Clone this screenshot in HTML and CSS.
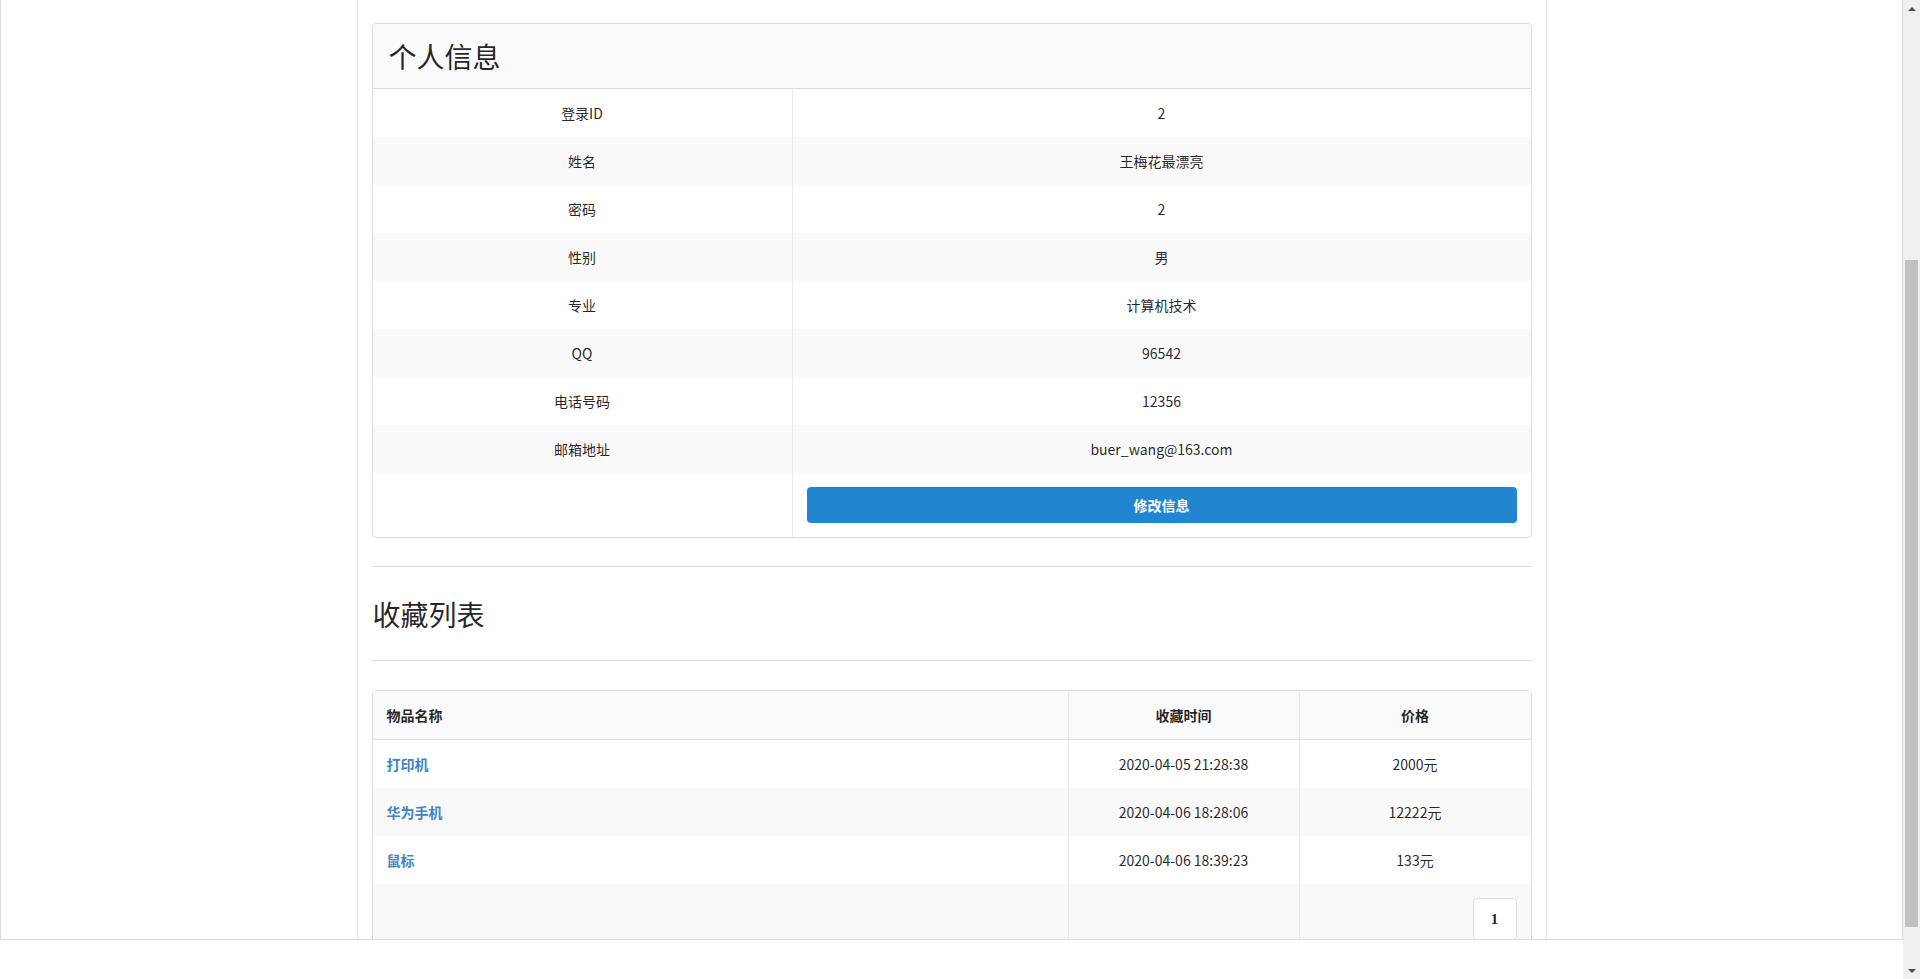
FILE: index.html
```html
<!DOCTYPE html>
<html lang="zh-CN">
<head>
<meta charset="utf-8">
<title>个人信息</title>
<link rel="stylesheet" href="styles.css">
</head>
<body>
<div class="screen">
  <div class="viewport">
    <div class="frame">
      <div class="container">
        <table class="card info">
          <colgroup><col class="info-label"><col class="info-value"></colgroup>
          <thead>
            <tr><th colspan="2" class="card-title">个人信息</th></tr>
          </thead>
          <tbody>
            <tr><td>登录ID</td><td>2</td></tr>
            <tr><td>姓名</td><td>王梅花最漂亮</td></tr>
            <tr><td>密码</td><td>2</td></tr>
            <tr><td>性别</td><td>男</td></tr>
            <tr><td>专业</td><td>计算机技术</td></tr>
            <tr><td>QQ</td><td>96542</td></tr>
            <tr><td>电话号码</td><td>12356</td></tr>
            <tr><td>邮箱地址</td><td>buer_wang@163.com</td></tr>
            <tr class="action-row"><td></td><td><button class="btn-primary" type="button">修改信息</button></td></tr>
          </tbody>
        </table>

        <div class="divider"></div>
        <h2 class="section-title">收藏列表</h2>
        <div class="divider"></div>

        <table class="card list">
          <colgroup><col class="list-name"><col class="list-time"><col class="list-price"></colgroup>
          <thead>
            <tr><th class="left">物品名称</th><th>收藏时间</th><th>价格</th></tr>
          </thead>
          <tbody>
            <tr><td class="left"><a class="item-link" href="#">打印机</a></td><td>2020-04-05 21:28:38</td><td>2000元</td></tr>
            <tr><td class="left"><a class="item-link" href="#">华为手机</a></td><td>2020-04-06 18:28:06</td><td>12222元</td></tr>
            <tr><td class="left"><a class="item-link" href="#">鼠标</a></td><td>2020-04-06 18:39:23</td><td>133元</td></tr>
          </tbody>
          <tfoot>
            <tr><td></td><td></td><td class="pager-cell"><a class="page-item" href="#">1</a></td></tr>
          </tfoot>
        </table>
      </div>
    </div>
  </div>
  <div class="scrollbar">
    <div class="sb-btn"><span class="arrow-up"></span></div>
    <div class="sb-track"><div class="sb-thumb"></div></div>
    <div class="sb-btn"><span class="arrow-down"></span></div>
  </div>
</div>
</body>
</html>
```

FILE: styles.css
```css
* { box-sizing: border-box; }

html, body {
  margin: 0;
  padding: 0;
  height: 979px;
  overflow: hidden;
  background: #ffffff;
}

body {
  font-family: "Noto Sans CJK SC", "Noto Sans", sans-serif;
  font-size: 14px;
  line-height: 20px;
  color: rgba(0, 0, 0, 0.87);
}

.screen {
  display: flex;
  height: 979px;
}

.viewport {
  flex: 1;
  min-width: 0;
  background: #ffffff;
}

.frame {
  height: 940px;
  border-left: 1px solid #dcdcdc;
  border-right: 1px solid #dcdcdc;
  border-bottom: 1px solid #dcdcdc;
  overflow: hidden;
  background: #ffffff;
}

.container {
  width: 1190px;
  margin: 0 auto;
  padding: 23px 14px 0;
  border-left: 1px solid #e6e6e6;
  border-right: 1px solid #e6e6e6;
  min-height: 940px;
}

/* tables */
.card {
  width: 1160px;
  table-layout: fixed;
  border-collapse: separate;
  border-spacing: 0;
  border: 1px solid #dedede;
  border-radius: 4px;
  background: #ffffff;
}

.card th,
.card td {
  padding: 14px;
  text-align: center;
  vertical-align: middle;
  font-weight: normal;
}

.card th + th,
.card td + td {
  border-left: 1px solid #e9e9e9;
}

.card thead th {
  background: #f9fafb;
  border-bottom: 1px solid #dedede;
}

.card thead tr:first-child th:first-child { border-top-left-radius: 3px; }
.card thead tr:first-child th:last-child { border-top-right-radius: 3px; }

.card tbody tr:nth-child(even) td {
  background: #f9f9fa;
}

.info-label { width: 419px; }
.info-value { width: 739px; }

.card-title {
  font-size: 28px;
  line-height: 36px;
  font-weight: normal;
}

.card th.card-title {
  text-align: left;
  padding-left: 16px;
}

.btn-primary {
  display: block;
  width: 100%;
  height: 36px;
  border: 0;
  border-radius: 4px;
  background: #2185d0;
  color: #ffffff;
  font-family: "Noto Sans CJK SC", "Noto Sans", sans-serif;
  font-size: 14px;
  font-weight: bold;
  line-height: 20px;
  cursor: pointer;
}

/* section */
.divider {
  margin-top: 28px;
  border-top: 1px solid #dedede;
  height: 0;
}

.section-title {
  margin: 29px 0 28px;
  padding-left: 1px;
  font-size: 28px;
  line-height: 36px;
  font-weight: normal;
  color: rgba(0, 0, 0, 0.87);
}

.section-title + .divider { margin-top: 0; }

.list { margin-top: 29px; }

.list-name { width: 695px; }
.list-time { width: 231px; }
.list-price { width: 232px; }

.list thead th {
  font-weight: bold;
}

.card th.left,
.card td.left {
  text-align: left;
}

.item-link {
  color: #4183c4;
  font-weight: bold;
  text-decoration: none;
}

.list tfoot td {
  background: #f9f9fa;
  height: 70px;
  vertical-align: top;
}

.card td.pager-cell { text-align: right; }

.page-item {
  display: inline-flex;
  align-items: center;
  justify-content: center;
  width: 44px;
  height: 42px;
  border: 1px solid #dedede;
  border-radius: 4px;
  background: #ffffff;
  color: rgba(0, 0, 0, 0.87);
  font-family: "Liberation Serif", serif;
  font-weight: bold;
  font-size: 15px;
  text-decoration: none;
}

/* fake scrollbar */
.scrollbar {
  width: 17px;
  height: 979px;
  display: flex;
  flex-direction: column;
  background: #f0f0f0;
}

.sb-btn {
  height: 17px;
  display: flex;
  align-items: center;
  justify-content: center;
}

.sb-track {
  flex: 1;
  padding: 243px 2px 35px;
}

.sb-thumb {
  height: 667px;
  background: #c1c1c1;
}

.arrow-up {
  width: 0;
  height: 0;
  border-left: 4px solid transparent;
  border-right: 4px solid transparent;
  border-bottom: 4px solid #505050;
}

.arrow-down {
  width: 0;
  height: 0;
  border-left: 4px solid transparent;
  border-right: 4px solid transparent;
  border-top: 4px solid #505050;
}
```
